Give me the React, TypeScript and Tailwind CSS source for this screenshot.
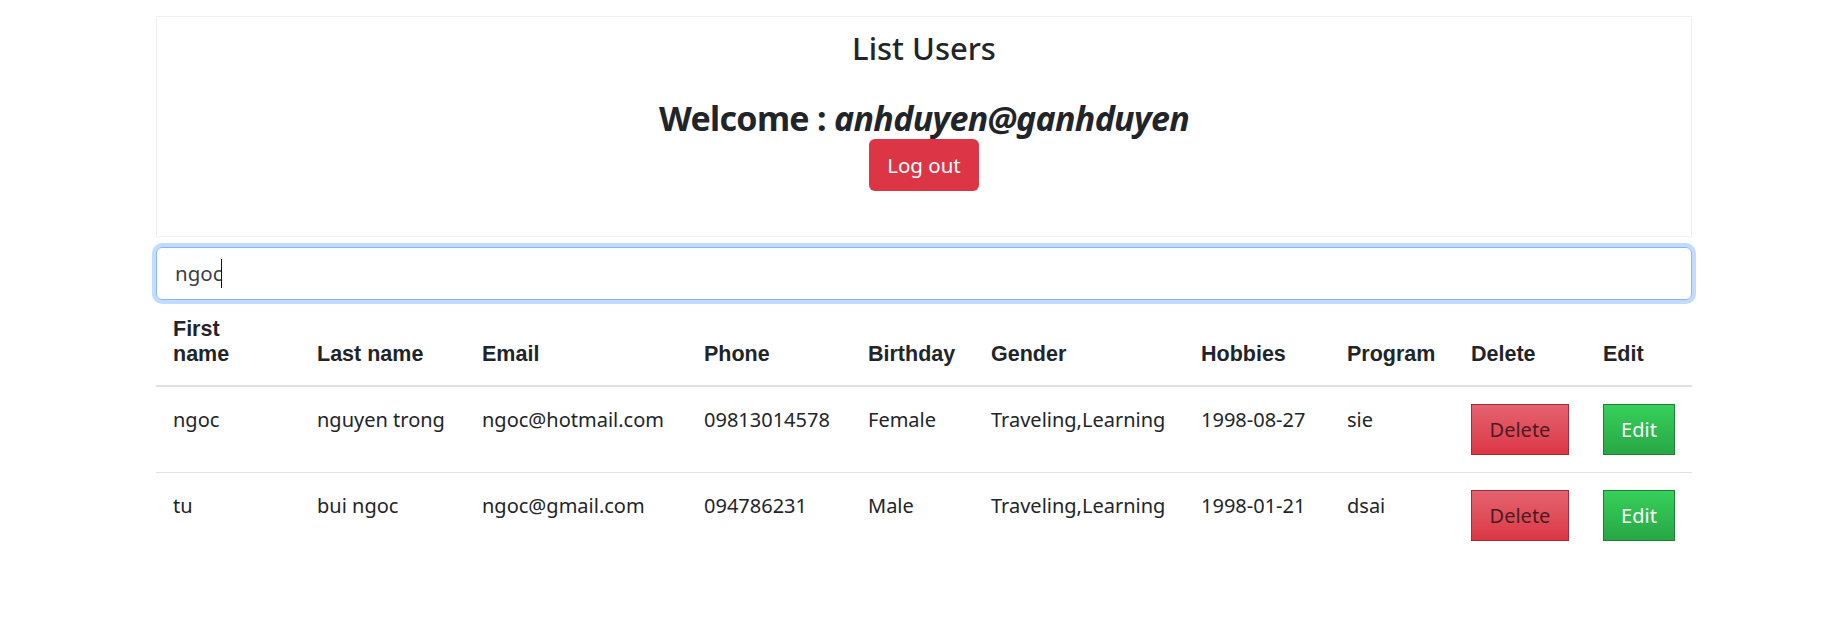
import React from "react";

const cols = [144, 165, 222, 164, 123, 210, 146, 124, 132, 106];

const headers: React.ReactNode[] = [
  <>First<br />name</>,
  "Last name",
  "Email",
  "Phone",
  "Birthday",
  "Gender",
  "Hobbies",
  "Program",
  "Delete",
  "Edit",
];

const rows = [
  ["ngoc", "nguyen trong", "ngoc@hotmail.com", "09813014578", "Female", "Traveling,Learning", "1998-08-27", "sie"],
  ["tu", "bui ngoc", "ngoc@gmail.com", "094786231", "Male", "Traveling,Learning", "1998-01-21", "dsai"],
];

const sans = "font-['Noto_Sans','Open_Sans',sans-serif]";

export default function App() {
  return (
    <div className="min-h-screen bg-white text-[#212529]">
      <div className="ml-[156px] w-[1536px] pt-[16px]">
        <div className={`flex h-[221px] flex-col items-center border border-[#f1f1f1] pt-[11px] ${sans}`}>
          <h3 className="text-[31px] leading-[40px] font-medium">List Users</h3>
          <h3 className="mt-[29px] text-[34px] leading-[42px] font-bold tracking-[-0.7px]">
            Welcome : <i>anhduyen@ganhduyen</i>
          </h3>
          <button className="mt-0 h-[52px] w-[110px] rounded-[6px] bg-[#dc3545] text-[20.5px] text-white">
            Log out
          </button>
        </div>

        <div className="mt-[10px] flex h-[53px] items-center rounded-[6px] border border-[#86b7fe] pl-[18px] shadow-[0_0_0_4px_rgba(13,110,253,0.25)]">
          <span className={`${sans} text-[20.5px] text-[#3a3f44]`}>ngoc</span>
          <span className="ml-[-2px] h-[29px] w-[1px] bg-[#111]" />
        </div>

        <table className="w-[1536px] table-fixed border-collapse">
          <colgroup>
            {cols.map((w, i) => (
              <col key={i} style={{ width: w }} />
            ))}
          </colgroup>
          <thead>
            <tr className="border-b-2 border-[#dee2e6]">
              {headers.map((h, i) => (
                <th
                  key={i}
                  className="pl-[17px] pr-0 pt-[17px] pb-[18px] text-left align-bottom font-['Liberation_Sans',Arial,sans-serif] text-[21.5px] leading-[25px] font-bold"
                >
                  {h}
                </th>
              ))}
            </tr>
          </thead>
          <tbody className={sans}>
            {rows.map((r, ri) => (
              <tr key={ri} className={ri === 0 ? "border-b border-[#dee2e6]" : ""}>
                {r.map((c, ci) => (
                  <td key={ci} className="pl-[17px] pt-[17px] pb-[17px] align-top text-[20px] leading-[32px] whitespace-nowrap">
                    {c}
                  </td>
                ))}
                <td className="pl-[17px] pt-[17px] pb-[17px] align-top">
                  <button className="h-[51px] w-[98px] border border-[#a52a36] bg-gradient-to-b from-[#e4626f] to-[#dc3545] text-[20px] text-[#4a1c22]">
                    Delete
                  </button>
                </td>
                <td className="pl-[17px] pt-[17px] pb-[17px] align-top">
                  <button className="h-[51px] w-[72px] border border-[#1e7e34] bg-gradient-to-b from-[#36d05a] to-[#28a745] text-[20px] text-white">
                    Edit
                  </button>
                </td>
              </tr>
            ))}
          </tbody>
        </table>
      </div>
    </div>
  );
}
